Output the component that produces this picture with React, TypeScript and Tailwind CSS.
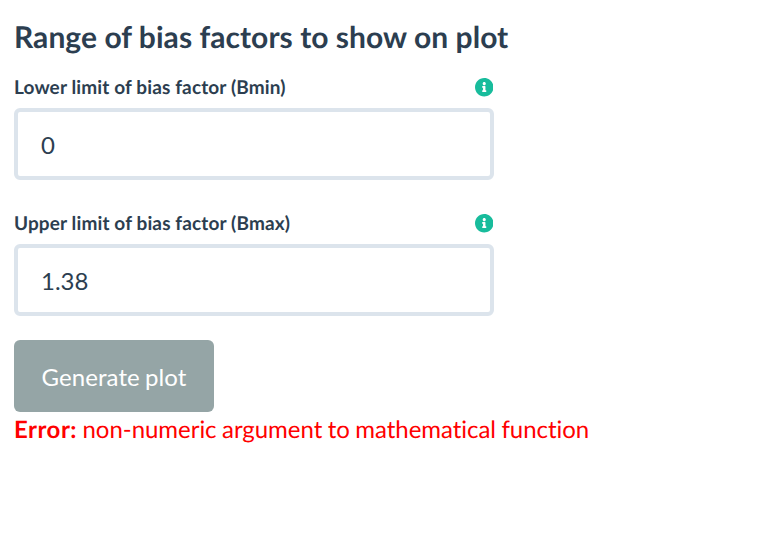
import React from "react";

function Info() {
  return (
    <svg viewBox="8 8 496 496" className="mr-px size-[18.5px] fill-[#18bc9c]" aria-label="info">
      <path d="M256 8C119 8 8 119.100 8 256s111 248 248 248 248-111 248-248S393 8 256 8zm0 110c23.200 0 42 18.800 42 42s-18.800 42-42 42-42-18.800-42-42 18.800-42 42-42zm56 254c0 6.600-5.400 12-12 12h-88c-6.600 0-12-5.400-12-12v-24c0-6.600 5.400-12 12-12h12v-64h-12c-6.600 0-12-5.400-12-12v-24c0-6.600 5.400-12 12-12h64c6.600 0 12 5.400 12 12v100h12c6.600 0 12 5.400 12 12v24z" />
    </svg>
  );
}

function Field({ label, value }: { label: string; value: string }) {
  return (
    <div className="w-[480px]">
      <div className="flex h-[27px] items-center justify-between text-[19px] font-bold tracking-[0.13px]">
        <label className="pt-px">{label}</label>
        <Info />
      </div>
      <input
        aria-label={label}
        defaultValue={value}
        className="mt-[7px] block h-[72px] w-full rounded-[6px] border-4 border-[#dce4ec] bg-white px-[23px] pt-px text-[24px] outline-none"
      />
    </div>
  );
}

export default function App() {
  return (
    <main className="h-[540px] bg-white px-3.5 pt-[17px] font-['Lato',sans-serif] text-[#2c3e50] antialiased [font-variant-ligatures:none] [text-rendering:geometricPrecision]">
      <h1 className="h-10 text-[30px] leading-10 font-bold tracking-[0.05px] whitespace-nowrap">Range of bias factors to show on plot</h1>
      <div className="mt-[17px] flex flex-col gap-[30px]">
        <Field label="Lower limit of bias factor (Bmin)" value="0" />
        <Field label="Upper limit of bias factor (Bmax)" value="1.38" />
      </div>
      <button className="mt-6 block h-[72px] w-[200px] rounded-[6px] bg-[#95a5a6] pt-px text-[24px] tracking-[0.08px] text-white [word-spacing:-1px]">
        Generate plot
      </button>
      <p className="text-[24px] leading-9 tracking-[-0.04px] whitespace-nowrap text-[#ff0000] [word-spacing:-0.6px]">
        <strong className="font-bold tracking-[0.5px]">Error:</strong> non-numeric argument to mathematical function
      </p>
    </main>
  );
}
